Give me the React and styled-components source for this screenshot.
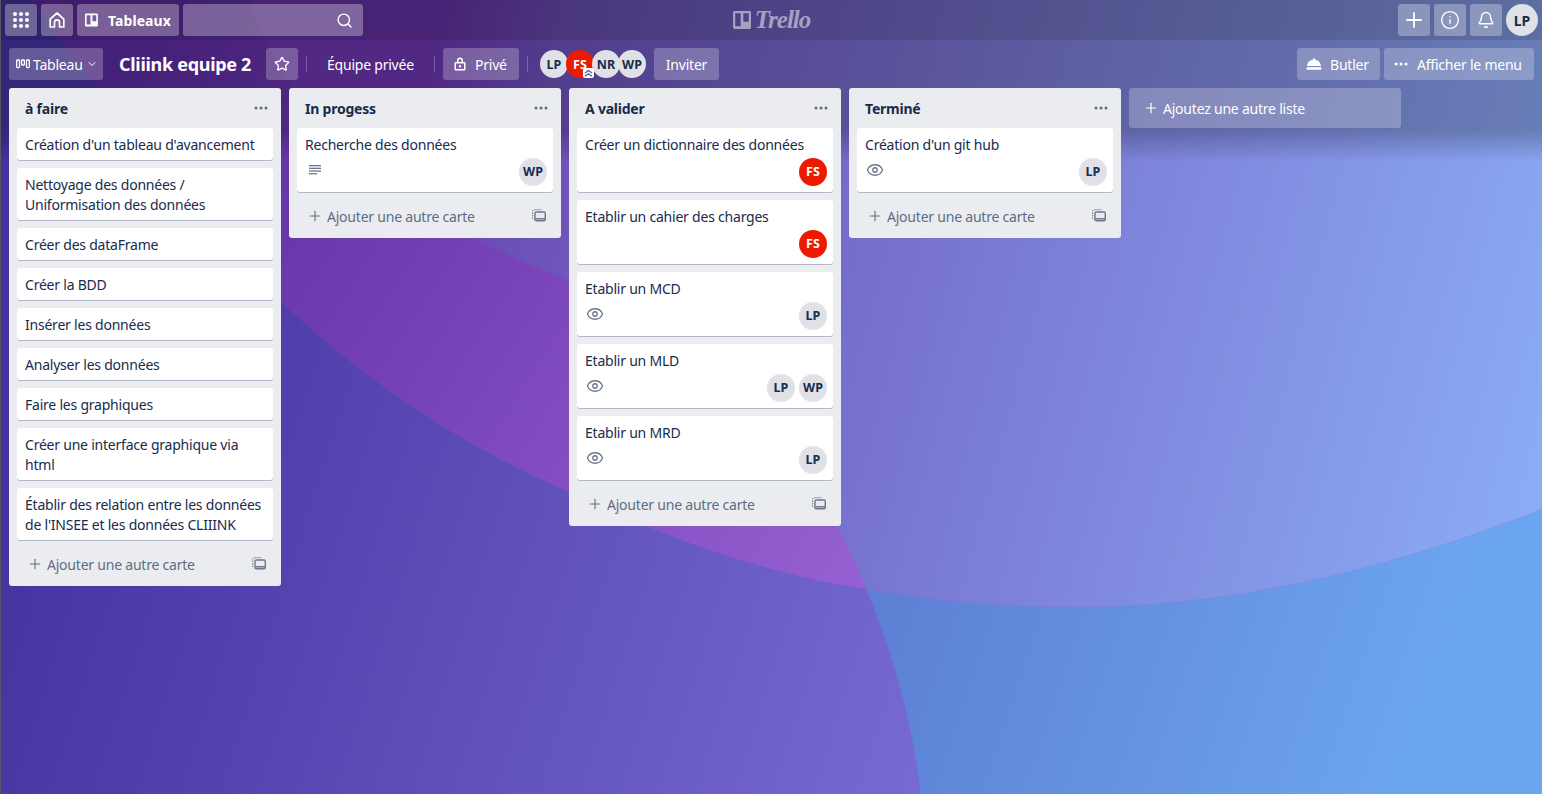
import React from "react";
import styled, { createGlobalStyle } from "styled-components";
import { Search, Plus, Info, Bell, Star, Eye, ChevronDown } from "lucide-react";

const Global = createGlobalStyle`
  html, body { margin: 0; padding: 0; height: 100%; overflow: hidden; }
  body { font-family: "Noto Sans", "Open Sans", sans-serif; font-size: 14px; letter-spacing: -0.22px; color: #172b4d; }
  * { box-sizing: border-box; }
`;

const Page = styled.div`
  position: relative;
  width: 1542px;
  height: 794px;
  overflow: hidden;
  background: #4a35a0;
`;

const Backdrop = styled.svg`
  position: absolute;
  inset: 0;
  width: 100%;
  height: 100%;
`;

const Shade = styled.div`
  position: absolute;
  inset: 0 0 auto 0;
  height: 162px;
  background: linear-gradient(
    to bottom,
    rgba(0, 0, 0, 0.32) 0,
    rgba(0, 0, 0, 0.32) 40px,
    rgba(0, 0, 0, 0.24) 40px,
    rgba(0, 0, 0, 0.24) 130px,
    rgba(0, 0, 0, 0) 162px
  );
`;

const EdgeLine = styled.div`
  position: absolute;
  inset: 0 auto 0 0;
  width: 1px;
  background: #5a5560;
`;

const Content = styled.div`
  position: relative;
  display: flex;
  flex-direction: column;
  height: 100%;
`;

const TopNav = styled.header`
  display: grid;
  grid-template-columns: 1fr auto 1fr;
  align-items: center;
  height: 40px;
  padding: 4px 4px 4px 5px;
`;

const NavSide = styled.div`
  display: flex;
  gap: 4px;
  justify-content: ${(p) => (p.$end ? "flex-end" : "flex-start")};
`;

const NavButton = styled.div`
  display: flex;
  align-items: center;
  justify-content: ${(p) => (p.$wide ? "flex-start" : "center")};
  width: ${(p) => p.$w || 32}px;
  height: 32px;
  padding: ${(p) => (p.$wide ? "0 8px" : "0")};
  border-radius: 3px;
  background: rgba(255, 255, 255, 0.3);
  color: #fff;
  font-weight: 700;
  font-size: 14px;
`;

const NavLabel = styled.span`
  margin-left: 10px;
  letter-spacing: 0.1px;
`;

const SearchBox = styled(NavButton)`
  justify-content: flex-end;
  padding-right: 10px;
`;

const Logo = styled.div`
  display: flex;
  align-items: center;
  gap: 4px;
  color: rgba(255, 255, 255, 0.5);
`;

const LogoWord = styled.span`
  font-family: "Liberation Serif", serif;
  font-style: italic;
  font-weight: 700;
  font-size: 25px;
  line-height: 26px;
  letter-spacing: -1px;
`;

const BoardBar = styled.div`
  display: flex;
  align-items: center;
  height: 32px;
  margin-top: 8px;
  padding: 0 8px 0 9px;
`;

const BarButton = styled.div`
  display: flex;
  align-items: center;
  justify-content: ${(p) => (p.$center ? "center" : "flex-start")};
  flex: none;
  width: ${(p) => p.$w}px;
  height: 32px;
  margin-left: ${(p) => p.$ml || 0}px;
  padding: ${(p) => (p.$center ? "0" : `0 0 0 ${p.$pad ?? 12}px`)};
  border-radius: 3px;
  background: ${(p) => (p.$plain ? "transparent" : "rgba(255, 255, 255, 0.24)")};
  color: #fff;
  font-size: 14px;
  white-space: nowrap;
`;

const BarText = styled.span`
  margin-left: ${(p) => p.$ml || 0}px;
`;

const BoardTitle = styled.h1`
  flex: none;
  width: 131px;
  margin: 0 0 0 16px;
  color: #fff;
  font-size: 18px;
  font-weight: 700;
  letter-spacing: -0.3px;
  white-space: nowrap;
`;

const Divider = styled.span`
  flex: none;
  width: 1px;
  height: 16px;
  margin-left: 8px;
  background: rgba(255, 255, 255, 0.24);
`;

const Members = styled.div`
  display: flex;
  margin-left: 12px;
`;

const Avatar = styled.div`
  position: relative;
  display: flex;
  flex: none;
  align-items: center;
  justify-content: center;
  width: ${(p) => p.$size || 28}px;
  height: ${(p) => p.$size || 28}px;
  margin-right: ${(p) => (p.$overlap ? -2 : 0)}px;
  border-radius: 50%;
  background: ${(p) => (p.$red ? "#eb1a00" : "#dfe1e6")};
  color: ${(p) => (p.$red ? "#fff" : "#172b4d")};
  font-size: ${(p) => (p.$size ? 14 : 12.5)}px;
  font-weight: 700;
  letter-spacing: 0;
`;

const AdminBadge = styled.svg`
  position: absolute;
  right: 0;
  bottom: 0;
  width: 11px;
  height: 10px;
`;

const BarRight = styled.div`
  display: flex;
  gap: 4px;
  margin-left: auto;
`;

const Board = styled.main`
  display: flex;
  align-items: flex-start;
  gap: 8px;
  margin-top: 8px;
  padding-left: 9px;
`;

const List = styled.section`
  flex: none;
  width: 272px;
  border-radius: 3px;
  background: #ebecf0;
`;

const ListHead = styled.div`
  display: flex;
  align-items: center;
  justify-content: space-between;
  height: 40px;
  padding: 0 12px 0 16px;
`;

const ListName = styled.h2`
  margin: 0;
  font-size: 14px;
  font-weight: 700;
`;

const Dots = styled.svg`
  width: 16px;
  height: 4px;
  fill: ${(p) => p.$color || "#5e6c84"};
`;

const Cards = styled.div`
  display: flex;
  flex-direction: column;
  gap: 8px;
  padding: 0 8px;
`;

const Card = styled.article`
  padding: 7px 6px 5px 8px;
  border-radius: 3px;
  background: #fff;
  box-shadow: 0 1px 0 rgba(9, 30, 66, 0.25);
  line-height: 20px;
`;

const CardTitle = styled.div`
  white-space: pre-line;
`;

const CardFoot = styled.div`
  display: flex;
  justify-content: space-between;
  padding: 3px 0 1px;
  color: #6b778c;
`;

const CardIcon = styled.div`
  display: flex;
  align-items: center;
  height: 16px;
  margin: 4px 0 0 ${(p) => p.$ml}px;
`;

const Assigned = styled.div`
  display: flex;
  gap: 4px;
  margin-left: auto;
`;

const ListFoot = styled.div`
  display: flex;
  align-items: center;
  height: 46px;
  padding: 2px 15px 0 18px;
  color: #5e6c84;
`;

const FootText = styled.span`
  margin-left: 4px;
`;

const Template = styled.svg`
  width: 14px;
  height: 14px;
  margin-left: auto;
`;

const AddList = styled.div`
  display: flex;
  flex: none;
  align-items: center;
  width: 272px;
  height: 40px;
  padding-left: 14px;
  border-radius: 3px;
  background: rgba(255, 255, 255, 0.24);
  color: #fff;
`;

const GridIcon = () => (
  <svg width="16" height="16" viewBox="0 0 16 16" fill="#fff">
    {[2, 8, 14].map((y) =>
      [2, 8, 14].map((x) => <circle key={`${x}-${y}`} cx={x} cy={y} r="2" />)
    )}
  </svg>
);

const HomeIcon = () => (
  <svg width="18" height="18" viewBox="0 0 18 18" fill="none" stroke="#fff" strokeWidth="1.7" strokeLinejoin="round">
    <path d="M2.2 8.2 9 2l6.8 6.2V16h-4.3v-4.6a2.5 2.5 0 0 0-5 0V16H2.2z" />
  </svg>
);

const BoardIcon = ({ size = 16, color = "#fff" }) => (
  <svg width={size} height={size} viewBox="0 0 16 16">
    <path
      fill={color}
      fillRule="evenodd"
      d="M1.5 0h13A1.5 1.5 0 0 1 16 1.5v13a1.5 1.5 0 0 1-1.5 1.5h-13A1.5 1.5 0 0 1 0 14.5v-13A1.500 1.500 0 0 1 1.500 0zM2 2v11.500h4.800V2zm7.200 0v7.500H14V2z"
    />
  </svg>
);

const ColumnsIcon = () => (
  <svg width="14" height="10" viewBox="0 0 14 10" fill="none" stroke="#fff" strokeWidth="1.3">
    <rect x="0.7" y="1" width="2.8" height="7.6" rx="0.8" />
    <rect x="5.6" y="1" width="2.8" height="5" rx="0.8" />
    <rect x="10.5" y="1" width="2.8" height="7.6" rx="0.8" />
  </svg>
);

const LockIcon = () => (
  <svg width="12" height="14" viewBox="0 0 12 14">
    <path
      fill="#fff"
      fillRule="evenodd"
      d="M3 5V3.6a3 3 0 0 1 6 0V5h1.2c.7 0 1.3.6 1.3 1.3v5.9c0 .7-.6 1.3-1.3 1.3H1.8c-.7 0-1.3-.6-1.3-1.3V6.300c0-.7.6-1.3 1.3-1.3zm1.500 0h3V3.600a1.500 1.500 0 0 0-3 0zM2 6.500V12h8V6.500zM6 8a1.200 1.200 0 1 1 0 2.400A1.200 1.200 0 0 1 6 8z"
    />
  </svg>
);

const ButlerIcon = () => (
  <svg width="16" height="14" viewBox="0 0 16 14" fill="#fff">
    <path d="M8 1.200a1 1 0 0 1 1 1v.5c3.400.5 5.700 3 6 6.300H1c.3-3.300 2.600-5.800 6-6.300v-.5a1 1 0 0 1 1-1z" />
    <rect x="0.500" y="10.300" width="15" height="2.400" rx="0.800" />
  </svg>
);

const LinesIcon = () => (
  <svg width="12" height="10" viewBox="0 0 12 10" fill="#6b778c">
    <rect y="0" width="12" height="1.300" />
    <rect y="2.700" width="12" height="1.300" />
    <rect y="5.400" width="12" height="1.300" />
    <rect y="8.100" width="8" height="1.300" />
  </svg>
);

const DotsIcon = ({ color }) => (
  <Dots viewBox="0 0 16 4" $color={color}>
    <circle cx="3" cy="2" r="1.500" />
    <circle cx="8" cy="2" r="1.500" />
    <circle cx="13" cy="2" r="1.500" />
  </Dots>
);

const TemplateIcon = () => (
  <Template viewBox="0 0 14 14" fill="none" stroke="#6b778c">
    <path strokeWidth="1" strokeDasharray="1.500 1" d="M.7 10V2.200c0-.8.6-1.500 1.500-1.500H10" />
    <rect x="3" y="3" width="10.300" height="8.800" rx="1.300" strokeWidth="1.400" />
    <path strokeWidth="1.500" d="M3.500 9.800h9.500" />
  </Template>
);

const lists = [
  {
    name: "à faire",
    cards: [
      { title: "Création d'un tableau d'avancement" },
      { title: "Nettoyage des données /\nUniformisation des données" },
      { title: "Créer des dataFrame" },
      { title: "Créer la BDD" },
      { title: "Insérer les données" },
      { title: "Analyser les données" },
      { title: "Faire les graphiques" },
      { title: "Créer une interface graphique via\nhtml" },
      { title: "Établir des relation entre les données\nde l'INSEE et les données CLIIINK" },
    ],
  },
  {
    name: "In progess",
    cards: [{ title: "Recherche des données", icon: "lines", members: ["WP"] }],
  },
  {
    name: "A valider",
    cards: [
      { title: "Créer un dictionnaire des données", members: ["FS"] },
      { title: "Etablir un cahier des charges", members: ["FS"] },
      { title: "Etablir un MCD", icon: "eye", members: ["LP"] },
      { title: "Etablir un MLD", icon: "eye", members: ["LP", "WP"] },
      { title: "Etablir un MRD", icon: "eye", members: ["LP"] },
    ],
  },
  {
    name: "Terminé",
    cards: [{ title: "Création d'un git hub", icon: "eye", members: ["LP"] }],
  },
];

const BoardCard = ({ card }) => (
  <Card>
    <CardTitle>{card.title}</CardTitle>
    {card.members && (
      <CardFoot>
        {card.icon && (
          <CardIcon $ml={card.icon === "eye" ? 1 : 4}>
            {card.icon === "eye" ? <Eye size={18} strokeWidth={1.7} /> : <LinesIcon />}
          </CardIcon>
        )}
        <Assigned>
          {card.members.map((m) => (
            <Avatar key={m} $red={m === "FS"}>{m}</Avatar>
          ))}
        </Assigned>
      </CardFoot>
    )}
  </Card>
);

const arcPath =
  "M250 0 C300 150 430 225 567 280 C700 350 800 450 838 528 C880 610 910 700 921 794 L1542 794 L1542 0 Z";

export default function App() {
  return (
    <Page>
      <Global />
      <Backdrop viewBox="0 0 1542 794" preserveAspectRatio="none">
        <defs>
          <linearGradient id="base" gradientUnits="userSpaceOnUse" x1="0" y1="500" x2="930" y2="794">
            <stop offset="0" stopColor="#45329f" />
            <stop offset="1" stopColor="#776bd2" />
          </linearGradient>
          <linearGradient id="blue" gradientUnits="userSpaceOnUse" x1="870" y1="600" x2="1400" y2="780">
            <stop offset="0" stopColor="#5d7fd4" />
            <stop offset="1" stopColor="#6ca5ef" />
          </linearGradient>
          <linearGradient id="purple" gradientUnits="userSpaceOnUse" x1="100" y1="100" x2="860" y2="590">
            <stop offset="0" stopColor="#5b2a9e" />
            <stop offset="1" stopColor="#9660d2" />
          </linearGradient>
          <linearGradient id="peri" gradientUnits="userSpaceOnUse" x1="400" y1="180" x2="1542" y2="480">
            <stop offset="0" stopColor="#6a34ac" />
            <stop offset="0.1" stopColor="#6c50b8" />
            <stop offset="1" stopColor="#8bacf5" />
          </linearGradient>
          <clipPath id="sheet">
            <path d="M32 0 L95 85 C150 165 220 245 283 304 C370 385 470 450 569 492 C670 540 770 575 867 589 C940 602 1010 607 1078 607 C1240 607 1400 565 1542 509 L1542 0 Z" />
          </clipPath>
        </defs>
        <rect width="1542" height="794" fill="url(#base)" />
        <path d={arcPath} fill="url(#blue)" />
        <rect width="1542" height="794" fill="url(#purple)" clipPath="url(#sheet)" />
        <path d={arcPath} fill="url(#peri)" clipPath="url(#sheet)" />
      </Backdrop>
      <Shade />
      <EdgeLine />
      <Content>
        <TopNav>
          <NavSide>
            <NavButton><GridIcon /></NavButton>
            <NavButton><HomeIcon /></NavButton>
            <NavButton $wide $w={102}>
              <BoardIcon />
              <NavLabel>Tableaux</NavLabel>
            </NavButton>
            <SearchBox $w={180}><Search size={17} strokeWidth={2} /></SearchBox>
          </NavSide>
          <Logo>
            <BoardIcon size={18} color="rgba(255,255,255,0.5)" />
            <LogoWord>Trello</LogoWord>
          </Logo>
          <NavSide $end>
            <NavButton><Plus size={24} strokeWidth={1.8} /></NavButton>
            <NavButton><Info size={20} strokeWidth={1.7} /></NavButton>
            <NavButton><Bell size={18} strokeWidth={2} /></NavButton>
            <Avatar $size={32}>LP</Avatar>
          </NavSide>
        </TopNav>

        <BoardBar>
          <BarButton $w={94} $pad={7}>
            <ColumnsIcon />
            <BarText $ml={3}>Tableau</BarText>
            <ChevronDown size={12} style={{ marginLeft: 3 }} />
          </BarButton>
          <BoardTitle>Cliiink equipe 2</BoardTitle>
          <BarButton $w={32} $ml={16} $center><Star size={16} strokeWidth={2} /></BarButton>
          <Divider />
          <BarButton $w={111} $ml={8} $plain>Équipe privée</BarButton>
          <Divider />
          <BarButton $w={76} $ml={8} $pad={11}>
            <LockIcon />
            <BarText $ml={9}>Privé</BarText>
          </BarButton>
          <Divider />
          <Members>
            <Avatar $overlap>LP</Avatar>
            <Avatar $overlap $red>
              FS
              <AdminBadge viewBox="0 0 11 10">
                <rect width="11" height="10" rx="2" fill="#fff" />
                <path d="M2 5 5.500 2.500 9 5M2 8.200 5.500 5.700 9 8.200" fill="none" stroke="#42639e" strokeWidth="1.300" />
              </AdminBadge>
            </Avatar>
            <Avatar $overlap>NR</Avatar>
            <Avatar>WP</Avatar>
          </Members>
          <BarButton $w={65} $ml={8} $center>Inviter</BarButton>
          <BarRight>
            <BarButton $w={83} $pad={9}>
              <ButlerIcon />
              <BarText $ml={8}>Butler</BarText>
            </BarButton>
            <BarButton $w={150} $pad={9}>
              <DotsIcon color="#fff" />
              <BarText $ml={8}>Afficher le menu</BarText>
            </BarButton>
          </BarRight>
        </BoardBar>

        <Board>
          {lists.map((list) => (
            <List key={list.name}>
              <ListHead>
                <ListName>{list.name}</ListName>
                <DotsIcon />
              </ListHead>
              <Cards>
                {list.cards.map((card) => (
                  <BoardCard key={card.title} card={card} />
                ))}
              </Cards>
              <ListFoot>
                <Plus size={16} strokeWidth={1.6} />
                <FootText>Ajouter une autre carte</FootText>
                <TemplateIcon />
              </ListFoot>
            </List>
          ))}
          <AddList>
            <Plus size={16} strokeWidth={1.8} />
            <FootText>Ajoutez une autre liste</FootText>
          </AddList>
        </Board>
      </Content>
    </Page>
  );
}
